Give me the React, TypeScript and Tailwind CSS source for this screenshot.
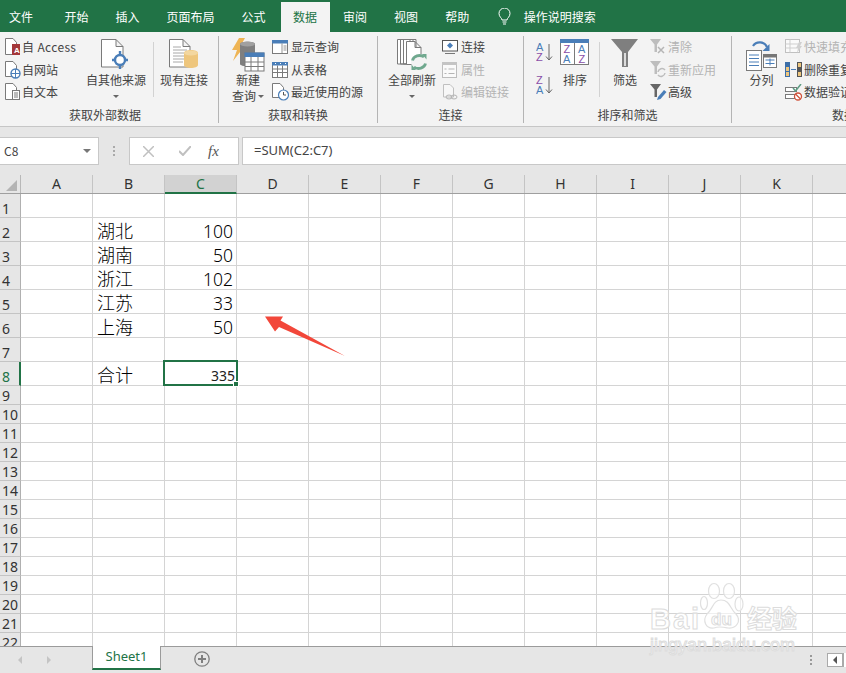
import React from "react";

const FONT = '"Noto Sans CJK SC", "Liberation Sans", sans-serif';
const G = "#7a7a7a";
const BLUE = "#4a7eb8";

const Doc = ({ w = 12, h = 16 }: { w?: number; h?: number }) => (
  <path d={`M.5.5H${w - 4}L${w - 0.5} 4.5V${h - 0.5}H.5Z M${w - 4}.5V4.5H${w - 0.5}`} fill="#fff" stroke={G} strokeWidth="1" />
);

const IconAccess = () => (
  <svg width="16" height="18" viewBox="0 0 16 18"><Doc h={17} /><rect x="7" y="6" width="8" height="11" fill="#a4373a" /><text x="9" y="15" fontSize="8" fontWeight="700" fill="#fff" fontFamily="Liberation Sans">A</text></svg>
);
const IconWeb = () => (
  <svg width="16" height="18" viewBox="0 0 16 18"><Doc h={16} /><circle cx="10.5" cy="12.5" r="4.5" fill="#fff" stroke={BLUE} strokeWidth="1.4" /><path d="M6 12.5h9M10.5 8v9" stroke={BLUE} /></svg>
);
const IconText = () => (
  <svg width="16" height="18" viewBox="0 0 16 18"><Doc h={17} /><rect x="7.5" y="7.5" width="7" height="9" fill="#fff" stroke={G} /><path d="M9 10h4M9 12h4M9 14h4" stroke={G} /></svg>
);
const IconOther = () => (
  <svg width="30" height="30" viewBox="0 0 30 30"><path d="M.5.5H15L22 7.5V28H.5Z M15 .5V7.5H22" fill="#fff" stroke={G} /><circle cx="19" cy="21" r="5" fill="#fff" stroke={BLUE} strokeWidth="2.4" /><path d="M19 12v5M19 25v5M11 21h4M23 21h4" stroke={BLUE} strokeWidth="2.4" /></svg>
);
const IconExisting = () => (
  <svg width="30" height="30" viewBox="0 0 30 30"><path d="M.5.5H14L21 7.5V28H.5Z M14 .5V7.5H21" fill="#fff" stroke={G} /><path d="M4 8h8M4 11h14M4 14h14M4 17h14M4 20h14M4 23h10" stroke="#a8a8a8" /><path d="M15 14c0-4 14-4 14 0v12c0 4-14 4-14 0Z" fill="#eec67d" /><ellipse cx="22" cy="14" rx="7" ry="2.6" fill="#f3d7a0" /></svg>
);
const IconNewQuery = () => (
  <svg width="34" height="34" viewBox="0 0 34 34"><path d="M8 0h6L9 9h4L2 23l4-11H1Z" fill="#eeb454" /><path d="M9 6c0-3 15-3 15 0v20c0 3-15 3-15 0Z" fill="#7f7f7f" /><ellipse cx="16.5" cy="6" rx="7.5" ry="2.4" fill="#a0a0a0" /><rect x="14" y="15" width="19" height="18" fill="#fff" stroke={G} /><rect x="13.5" y="14.5" width="20" height="4.5" fill={BLUE} /><path d="M14 24h19M14 28.500h19M20 19v14M27 19v14" stroke={G} /></svg>
);
const IconShowQuery = () => (
  <svg width="16" height="15" viewBox="0 0 16 15"><rect x=".5" y=".5" width="15" height="13" fill="#fff" stroke={G} /><rect x="0" y="0" width="16" height="3.500" fill={BLUE} /><path d="M10 3.500v10M11.500 6h3M11.500 8h3M11.500 10h3" stroke={G} strokeWidth=".8" /></svg>
);
const IconTable = () => (
  <svg width="16" height="16" viewBox="0 0 16 16"><rect x=".5" y=".5" width="15" height="15" fill="#fff" stroke={G} /><rect x="0" y="0" width="16" height="3.500" fill={BLUE} /><path d="M.5 7h15M.5 10.500h15M5.500 3.500v12M10.500 3.500v12" stroke={G} /><path d="M3 1.500h1M8 1.500h1M13 1.500h1" stroke="#fff" /></svg>
);
const IconRecent = () => (
  <svg width="17" height="18" viewBox="0 0 17 18"><Doc h={15} /><circle cx="11.500" cy="12" r="5" fill="#fff" stroke={BLUE} strokeWidth="1.200" /><path d="M11.500 9v3h2.500" fill="none" stroke="#555" /></svg>
);
const IconRefresh = () => (
  <svg width="30" height="32" viewBox="0 0 30 32"><path d="M.5.5H13V25H.5Z M3.500.5H16V25H3.500Z M6.500.5H19V25H6.500Z" fill="#fff" stroke={G} /><path d="M9.500 2.500H18L24 8.500V25.500H9.500Z M18 2.500V8.500H24" fill="#fff" stroke={G} /><circle cx="22" cy="23" r="8" fill="#f3f3f3" /><path d="M15.500 21.500a7 6 0 0 1 11.500-3.500M28.500 24.500a7 6 0 0 1-11.500 3.500" fill="none" stroke="#6fa88e" strokeWidth="2.800" /><path d="M25 15h4.500v5.500ZM19 31h-4.500v-5.500Z" fill="#6fa88e" /></svg>
);
const IconConn = () => (
  <svg width="16" height="15" viewBox="0 0 16 15"><rect x=".5" y=".5" width="15" height="10.500" fill="#fff" stroke="#555" /><path d="M8 2.500l3 3-3 3-3-3Z" fill={BLUE} /><path d="M3 13.500h10" stroke="#777" /></svg>
);
const IconProps = () => (
  <svg width="15" height="16" viewBox="0 0 15 16"><rect x=".5" y=".5" width="14" height="15" fill="#fafafa" stroke="#bdbdbd" /><rect x="0" y="0" width="15" height="3" fill="#c4c4c4" /><path d="M6.500 7h6M6.500 11.500h6M2.500 7h2M2.500 11.500h2" stroke="#b5b5b5" /></svg>
);
const IconEdit = () => (
  <svg width="16" height="16" viewBox="0 0 16 16"><path d="M1.500.5H8L11.500 4V13H1.500Z" fill="#f7f7f7" stroke="#c0c0c0" /><ellipse cx="7" cy="13" rx="3" ry="2" fill="none" stroke="#b5b5b5" /><ellipse cx="12" cy="13" rx="3" ry="2" fill="none" stroke="#b5b5b5" /></svg>
);
const SortSmall = ({ flip }: { flip?: boolean }) => (
  <svg width="18" height="20" viewBox="0 0 18 20" fontFamily="Liberation Sans" fontSize="11" fontWeight="400">
    <text x="0" y="9" fill={flip ? "#8a4fa8" : BLUE}>{flip ? "Z" : "A"}</text>
    <text x="0" y="19" fill={flip ? BLUE : "#8a4fa8"}>{flip ? "A" : "Z"}</text>
    <path d="M13 2v16M10 14.500l3 3.500 3-3.500" fill="none" stroke="#666" />
  </svg>
);
const IconSort = () => (
  <svg width="30" height="26" viewBox="0 0 30 26" fontFamily="Liberation Sans" fontSize="11" fontWeight="400">
    <rect x=".5" y=".5" width="28" height="25" fill="#fff" stroke={G} />
    <rect x="0" y="0" width="29" height="4" fill={BLUE} />
    <path d="M14.500 4v22" stroke={G} />
    <text x="3.500" y="14" fill="#8a4fa8">Z</text><text x="3" y="24" fill={BLUE}>A</text>
    <text x="18" y="14" fill={BLUE}>A</text><text x="18.500" y="24" fill="#8a4fa8">Z</text>
  </svg>
);
const IconFilter = ({ c = "#7f7f7f" }: { c?: string }) => (
  <svg width="28" height="28" viewBox="0 0 28 28"><path d="M0 0H27L17 13V28H11V13Z" fill={c} /><path d="M13 14h2v13h-2z" fill="#dcdcdc" /></svg>
);
const SmallFunnel = ({ kind }: { kind: "clear" | "re" | "adv" }) => (
  <svg width="18" height="17" viewBox="0 0 18 17">
    <path d="M0 0H11L7 5.500V13H4.500V5.500Z" fill={kind === "adv" ? "#666" : "#bdbdbd"} />
    {kind === "clear" && <path d="M8 8l6 6M14 8l-6 6" stroke="#b5b5b5" strokeWidth="1.500" />}
    {kind === "re" && <path d="M8 11a4 4 0 0 1 7-2M15 12a4 4 0 0 1-7 2" fill="none" stroke="#bdbdbd" strokeWidth="1.500" />}
    {kind === "adv" && <path d="M7 16l1-3 6-7 2.500 2-6 7Z" fill={BLUE} />}
  </svg>
);
const IconColumns = () => (
  <svg width="31" height="33" viewBox="0 0 31 33">
    <path d="M7 7a8 8 0 0 1 14 1" fill="none" stroke={BLUE} strokeWidth="2.200" />
    <path d="M23.500 5v7h-7Z" fill={BLUE} />
    <rect x=".5" y="11.500" width="15" height="20" fill="#fff" stroke={G} />
    <path d="M3 16h10M3 19.500h10M3 23h10M3 26.500h10" stroke={BLUE} />
    <rect x="17.500" y="15.500" width="13" height="13" fill="#fff" stroke={G} />
    <rect x="17" y="15" width="14" height="3.500" fill="#777" />
    <path d="M19.500 21h9M19.500 24.500h9M24 19.500v7" stroke={BLUE} />
  </svg>
);
const IconFlash = () => (
  <svg width="18" height="16" viewBox="0 0 18 16"><rect x=".5" y=".5" width="14" height="13" fill="#fafafa" stroke="#c0c0c0" /><path d="M.5 5h14M.5 9h14M5 .5v13" stroke="#cfcfcf" /><path d="M14 3h3l-2 4h2l-5 7 1-5h-2Z" fill="#d0d0d0" /></svg>
);
const IconDup = () => (
  <svg width="17" height="15" viewBox="0 0 17 15"><rect x="0" y="0" width="5" height="15" fill="#3d6fa8" /><rect x="1" y="5" width="3" height="4" fill="#eec67d" /><rect x="12" y="0" width="5" height="15" fill="#555" /><rect x="13" y="1" width="3" height="4" fill="#eec67d" /><rect x="13" y="10" width="3" height="4" fill="#eec67d" /><rect x="1" y="10" width="3" height="4" fill="#eec67d" /><path d="M6 7.500h5" stroke={BLUE} /></svg>
);
const IconValid = () => (
  <svg width="18" height="17" viewBox="0 0 18 17"><rect x=".5" y="3.500" width="11" height="4" fill="#fff" stroke={G} /><rect x=".5" y="10.500" width="9" height="4" fill="#fff" stroke={G} /><path d="M8 4l2.500 3L16 0" fill="none" stroke="#5e9d83" strokeWidth="1.500" /><circle cx="13" cy="12.500" r="3.500" fill="#fff" stroke="#d0523a" strokeWidth="1.300" /><path d="M10.500 10l5 5" stroke="#d0523a" strokeWidth="1.300" /></svg>
);

const Caret = () => <span className="inline-block h-0 w-0 border-x-[3px] border-t-[3px] border-x-transparent border-t-[#666]" />;

const Small = ({ icon, label, off, w = 19 }: { icon: React.ReactNode; label: React.ReactNode; off?: boolean; w?: number }) => (
  <div className={`flex h-[22.5px] items-center whitespace-nowrap ${off ? "text-[#b4b4b4]" : "text-[#444]"}`}>
    <span className="flex shrink-0 items-center" style={{ width: w }}>{icon}</span>
    {label}
  </div>
);

const Big = ({ icon, lines, caret, className }: { icon: React.ReactNode; lines?: string[]; caret?: boolean; className: string }) => (
  <div className={`flex shrink-0 flex-col items-center text-[#444] ${className}`}>
    <div className="flex h-[36px] w-full items-start justify-center pt-[3px]">{icon}</div>
    {(lines ?? []).map((l) => (
      <div key={l} className="h-[16px] whitespace-nowrap leading-[16px]">{l}</div>
    ))}
    {caret && <div className="flex h-[16px] items-center"><Caret /></div>}
  </div>
);

const Group = ({ label, className, children }: { label: string; className: string; children: React.ReactNode }) => (
  <div className={`flex h-[87px] shrink-0 flex-col border-r border-[#b4b4b4] ${className}`}>
    <div className="flex h-[70px] items-start">{children}</div>
    <div className="flex h-[17px] items-center justify-center text-[#444]">{label}</div>
  </div>
);

const Sep = ({ className }: { className: string }) => <div className={`mt-[6px] h-[55px] w-px shrink-0 bg-[#d2d2d2] ${className}`} />;

const tabs = ["开始", "插入", "页面布局", "公式"];
const cols = ["A", "B", "C", "D", "E", "F", "G", "H", "I", "J", "K", ""];
const rowHeights = [24, 24, 24, 24, 24, 24, 24, 24, ...Array(14).fill(19)] as number[];
const rowData: Record<number, [string, string]> = {
  2: ["湖北", "100"],
  3: ["湖南", "50"],
  4: ["浙江", "102"],
  5: ["江苏", "33"],
  6: ["上海", "50"],
  8: ["合计", ""],
};

export default function App() {
  return (
    <div className="relative flex h-[673px] w-[846px] flex-col overflow-hidden bg-[#e6e6e6] text-[12px]" style={{ fontFamily: FONT }}>
      {/* Menu tabs */}
      <div className="flex h-[32px] shrink-0 items-end bg-[#217346] text-[12px] text-white">
        <div className="flex h-[30px] items-center pl-[9px] pr-[18px]">文件</div>
        {tabs.map((t) => (
          <div key={t} className="flex h-[30px] items-center px-[13.5px]">{t}</div>
        ))}
        <div className="ml-[1.500px] flex h-[30px] items-center bg-[#f3f3f3] px-[12.500px] text-[#217346]">数据</div>
        {["审阅", "视图", "帮助"].map((t) => (
          <div key={t} className="flex h-[30px] items-center px-[13.5px]">{t}</div>
        ))}
        <div className="flex h-[30px] items-center pl-[15px]">
          <svg width="13" height="18" viewBox="0 0 13 18" fill="none" stroke="#fff"><path d="M4 12c0-2-3-3-3-6.500a5.500 5.500 0 0 1 11 0C12 9 9 10 9 12Z" /><path d="M4.500 14h4M5 16h3" /></svg>
          <span className="ml-[13px]">操作说明搜索</span>
        </div>
      </div>

      {/* Ribbon */}
      <div className="flex h-[95px] shrink-0 overflow-hidden border-b border-[#c6c6c6] bg-[#f3f3f3] pt-[4px]">
        <Group label="获取外部数据" className="w-[219px] pr-[8px]">
          <div className="ml-[5px] w-[81px] shrink-0">
            <Small w={17} icon={<IconAccess />} label={<span className="tracking-[0.35px]">自 Access</span>} />
            <Small w={17} icon={<IconWeb />} label="自网站" />
            <Small w={17} icon={<IconText />} label="自文本" />
          </div>
          <Big className="w-[60px]" icon={<IconOther />} lines={["自其他来源"]} caret />
          <Sep className="ml-[7px]" />
          <Big className="ml-[6px] w-[48px]" icon={<IconExisting />} lines={["现有连接"]} />
        </Group>
        <Group label="获取和转换" className="w-[159px]">
          <div className="ml-[10px] flex w-[38px] shrink-0 flex-col items-center text-[#444]">
            <div className="flex h-[36px] items-start pt-[2px]">
              <IconNewQuery />
            </div>
            <div className="h-[16px] leading-[16px]">新建</div>
            <div className="flex h-[16px] items-center gap-[2px] whitespace-nowrap leading-[16px]">查询<Caret /></div>
          </div>
          <div className="ml-[5px] shrink-0">
            <Small icon={<IconShowQuery />} label="显示查询" />
            <Small icon={<IconTable />} label="从表格" />
            <Small icon={<IconRecent />} label="最近使用的源" />
          </div>
        </Group>
        <Group label="连接" className="w-[146px]">
          <Big className="ml-[10px] w-[48px]" icon={<IconRefresh />} lines={["全部刷新"]} caret />
          <div className="ml-[6px] shrink-0">
            <Small icon={<IconConn />} label="连接" />
            <Small off icon={<IconProps />} label="属性" />
            <Small off icon={<IconEdit />} label="编辑链接" />
          </div>
        </Group>
        <Group label="排序和筛选" className="w-[208px]">
          <div className="ml-[12px] flex h-[66px] w-[18px] shrink-0 flex-col justify-start gap-[13px] pt-[6px]">
            <SortSmall />
            <SortSmall flip />
          </div>
          <Big className="ml-[6px] w-[30px]" icon={<IconSort />} lines={["排序"]} />
          <Sep className="ml-[9px]" />
          <Big className="ml-[11px] w-[28px]" icon={<IconFilter />} lines={["筛选"]} />
          <div className="ml-[11px] shrink-0">
            <Small w={18} off icon={<SmallFunnel kind="clear" />} label="清除" />
            <Small w={18} off icon={<SmallFunnel kind="re" />} label="重新应用" />
            <Small w={18} icon={<SmallFunnel kind="adv" />} label="高级" />
          </div>
        </Group>
        <Group label="数据工具" className="w-[248px] border-r-0">
          <Big className="ml-[14px] w-[31px]" icon={<IconColumns />} lines={["分列"]} />
          <div className="ml-[8px] shrink-0">
            <Small off icon={<IconFlash />} label="快速填充" />
            <Small icon={<IconDup />} label="删除重复项" />
            <Small icon={<IconValid />} label="数据验证" />
          </div>
        </Group>
      </div>

      {/* Formula bar */}
      <div className="mt-[10px] flex h-[28px] shrink-0 items-stretch text-[12px]">
        <div className="flex w-[99px] items-center justify-between border-y border-r border-[#c8c8c8] bg-white pl-[4px] pr-[7px] text-[#444]">
          C8
          <span className="h-0 w-0 border-x-[4px] border-t-[4px] border-x-transparent border-t-[#777]" />
        </div>
        <div className="flex w-[30px] items-center justify-center pr-[1px]">
          <span className="flex flex-col gap-[2px]">
            <i className="block h-[2px] w-[2px] bg-[#aaa]" />
            <i className="block h-[2px] w-[2px] bg-[#aaa]" />
            <i className="block h-[2px] w-[2px] bg-[#aaa]" />
          </span>
        </div>
        <div className="flex w-[110px] items-center border border-[#c8c8c8] bg-white">
          <svg className="ml-[13px]" width="11" height="11" viewBox="0 0 11 11" stroke="#c0c0c0" strokeWidth="1.500"><path d="M0 0l11 11M11 0L0 11" /></svg>
          <svg className="ml-[25px]" width="12" height="10" viewBox="0 0 12 10" fill="none" stroke="#c0c0c0" strokeWidth="2"><path d="M0 5l4 4 8-9" /></svg>
          <span className="ml-[17px] italic text-[#555]" style={{ fontFamily: '"Liberation Serif", serif', fontSize: 15 }}>fx</span>
        </div>
        <div className="ml-[3px] flex flex-1 items-center border-y border-l border-[#c8c8c8] bg-white pl-[11px] text-[13px] text-[#444]" style={{ fontFamily: '"Noto Sans", sans-serif' }}>
          =SUM(C2:C7)
        </div>
      </div>

      {/* Sheet */}
      <div className="mt-[10px] min-h-0 flex-1 overflow-hidden" style={{ fontFamily: '"Noto Sans", "Noto Sans CJK SC", sans-serif' }}>
        {/* header */}
        <div className="flex h-[19px] border-b border-[#9f9f9f] text-[14px] text-[#333]">
          <div className="relative w-[21px] shrink-0 border-r border-[#b8b8b8]">
            <span className="absolute bottom-[2px] right-[3px] h-0 w-0 border-b-[11px] border-l-[11px] border-b-[#b4b4b4] border-l-transparent" />
          </div>
          {cols.map((c) => (
            <div
              key={c || "L"}
              className={`flex w-[72px] shrink-0 items-center justify-center border-r border-[#c4c4c4] leading-none ${c === "C" ? "-mb-px border-b-2 border-b-[#217346] bg-[#d2d2d2] text-[#217346]" : ""}`}
            >
              {c}
            </div>
          ))}
        </div>
        {/* rows */}
        {rowHeights.map((h, i) => {
          const n = i + 1;
          const d = rowData[n];
          return (
            <div key={n} className="flex shrink-0 bg-white" style={{ height: h }}>
              <div
                className={`flex w-[21px] shrink-0 items-end justify-start border-b pl-[2px] text-[14px] leading-[16px] ${n === 8 ? "border-r-2 border-b-[#c4c4c4] border-r-[#217346] text-[#217346]" : "border-r border-[#b0b0b0] border-b-[#c4c4c4] text-[#333]"} bg-[#e6e6e6]`}
              >
                {n}
              </div>
              {cols.map((c) => (
                <div
                  key={c || "L"}
                  className="relative flex w-[72px] shrink-0 items-end border-b border-r border-[#d4d4d4] text-[18px] font-light leading-[20px] text-black"
                >
                  {c === "B" && d && <span className="pl-[4px]">{d[0]}</span>}
                  {c === "C" && d && d[1] && <span className="w-full pr-[3px] text-right text-[17.500px]">{d[1]}</span>}
                  {c === "C" && n === 8 && (
                    <div className="absolute -left-[2px] -top-[2px] z-10 flex h-[26px] w-[75px] items-center justify-end border-2 border-[#217346] pr-[1px] pt-[5px] text-[14px] font-normal leading-none text-[#222]">
                      335
                      <span className="absolute -bottom-[3px] -right-[3px] h-[6px] w-[6px] border border-white bg-[#217346]" />
                    </div>
                  )}
                </div>
              ))}
            </div>
          );
        })}
      </div>

      {/* Sheet tabs */}
      <div className="flex h-[27px] shrink-0 border-t border-[#9b9b9b] bg-[#e6e6e6]">
        <div className="flex w-[92px] shrink-0 items-center pl-[18px]">
          <span className="h-0 w-0 border-y-[4px] border-r-[4px] border-y-transparent border-r-[#c4c4c4]" />
          <span className="ml-[25px] h-0 w-0 border-y-[4px] border-l-[4px] border-y-transparent border-l-[#c4c4c4]" />
        </div>
        <div className="-mt-px flex h-[24px] w-[69px] shrink-0 items-center justify-center border-x border-b-2 border-x-[#9b9b9b] border-b-[#217346] bg-white text-[13px] text-[#217346]" style={{ fontFamily: '"Noto Sans", sans-serif' }}>
          Sheet1
        </div>
        <div className="ml-[33px] flex items-center pb-[2px]">
          <svg width="16" height="16" viewBox="0 0 16 16" fill="none" stroke="#7f7f7f"><circle cx="8" cy="8" r="7.200" strokeWidth="1.300" /><path d="M8 4v8M4 8h8" strokeWidth="2" /></svg>
        </div>
        <div className="ml-auto flex items-center">
          <span className="mr-[15px] flex flex-col gap-[2px]">
            <i className="block h-[2px] w-[2px] bg-[#999]" />
            <i className="block h-[2px] w-[2px] bg-[#999]" />
            <i className="block h-[2px] w-[2px] bg-[#999]" />
          </span>
          <span className="flex h-[14px] w-[16px] items-center justify-center border border-[#aaa] bg-white">
            <span className="h-0 w-0 border-y-[4px] border-r-[4px] border-y-transparent border-r-[#555]" />
          </span>
          <span className="h-[14px] w-[3px] border-l border-[#aaa] bg-white" />
        </div>
      </div>

      {/* Red arrow annotation */}
      <svg className="pointer-events-none absolute left-[260px] top-[310px]" width="90" height="50" viewBox="260 310 90 50">
        <path d="M265 316.500L283 316.500L280.500 320.500L345 356L279 327L275 331.500Z" fill="#f2473a" />
      </svg>

      {/* Watermark */}
      <div className="pointer-events-none absolute left-[648px] top-[580px] h-[75px] w-[160px] text-white/70 [-webkit-text-stroke:1px_#dcdcdc]" style={{ fontFamily: '"Liberation Sans", "Noto Sans CJK SC", sans-serif' }}>
        <svg className="absolute left-[50px] top-0" width="48" height="52" viewBox="0 0 48 52" fill="#ffffffa0" stroke="#e0e0e0" strokeWidth="1.200">
          <ellipse cx="6" cy="23" rx="3.500" ry="6.500" />
          <ellipse cx="16" cy="11" rx="5.500" ry="7.500" />
          <ellipse cx="31" cy="11" rx="5.500" ry="7.500" />
          <ellipse cx="41" cy="24" rx="4" ry="7" />
          <path d="M23 20c9 0 9 9 15 14 6 7 0 15-8 14-5-1-9-2-14 0-8 1-12-7-7-14 6-5 6-14 14-14Z" />
        </svg>
        <span className="absolute left-[2px] top-[25px] text-[29px] font-bold leading-none tracking-[2px]">Bai</span>
        <span className="absolute left-[63px] top-[31px] text-[17px] font-bold leading-none">du</span>
        <span className="absolute left-[99px] top-[27px] whitespace-nowrap text-[25px] font-bold leading-none">经验</span>
        <span className="absolute left-[2px] top-[56px] whitespace-nowrap text-[18px] leading-none">jingyan.baidu.com</span>
      </div>
    </div>
  );
}
